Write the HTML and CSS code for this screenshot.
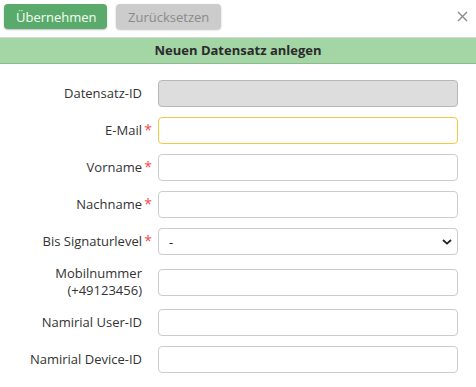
FILE: index.html
```html
<!DOCTYPE html>
<html lang="de">

<head>
    <meta charset="UTF-8">
    <meta name="viewport" content="width=device-width, initial-scale=1.0">
    <title>Neuen Datensatz anlegen</title>
    <link rel="stylesheet" href="styles.css">
</head>

<body>

    <div class="dialog">
        <!-- Toolbar -->
        <div class="toolbar">
            <button type="button" class="btn btn-primary">Übernehmen</button>
            <button type="button" class="btn btn-secondary">Zurücksetzen</button>
            <span class="close-btn">
                <svg width="11" height="11" viewBox="0 0 11 11">
                    <path d="M1 1 L10 10 M10 1 L1 10" stroke="#8a8a8a" stroke-width="1.4" fill="none" />
                </svg>
            </span>
        </div>

        <div class="panel-title">Neuen Datensatz anlegen</div>

        <!-- Form -->
        <form class="record-form">
            <div class="form-row">
                <label class="form-label">Datensatz-ID</label>
                <input type="text" class="input-field input-disabled" disabled>
            </div>
            <div class="form-row">
                <label class="form-label required">E-Mail</label>
                <input type="text" class="input-field input-focus">
            </div>
            <div class="form-row">
                <label class="form-label required">Vorname</label>
                <input type="text" class="input-field">
            </div>
            <div class="form-row">
                <label class="form-label required">Nachname</label>
                <input type="text" class="input-field">
            </div>
            <div class="form-row">
                <label class="form-label required">Bis Signaturlevel</label>
                <div class="select-wrap">
                    <select class="input-field select-field">
                        <option>-</option>
                    </select>
                    <svg class="select-arrow" width="10" height="6" viewBox="0 0 10 6">
                        <path d="M1 1 L5 4.6 L9 1" stroke="#222" stroke-width="1.8" fill="none" />
                    </svg>
                </div>
            </div>
            <div class="form-row">
                <label class="form-label">Mobilnummer<br>(+49123456)</label>
                <input type="text" class="input-field">
            </div>
            <div class="form-row">
                <label class="form-label">Namirial User-ID</label>
                <input type="text" class="input-field">
            </div>
            <div class="form-row">
                <label class="form-label">Namirial Device-ID</label>
                <input type="text" class="input-field">
            </div>
        </form>
    </div>

</body>

</html>
```

FILE: styles.css
```css
/* Global Styles */
body {
    font-family: "Open Sans", Arial, sans-serif;
    font-size: 13px;
    color: #333;
    background-color: white;
    margin: 0;
    padding: 0;
}

.dialog {
    width: 476px;
}

/* Toolbar */
.toolbar {
    display: flex;
    align-items: center;
    gap: 9px;
    padding: 4px 4px 8px 4px;
}

.btn {
    height: 25px;
    padding: 0 12px;
    border: none;
    border-radius: 4px;
    font-family: inherit;
    font-size: 13px;
    box-shadow: 0 1px 2px rgba(0, 0, 0, 0.25);
}

.btn-primary {
    width: 103px;
    background-color: #5aab6b;
    color: #f4fff4;
}

.btn-secondary {
    width: 105px;
    background-color: #cccccc;
    color: #8a8a8a;
}

.close-btn {
    margin-left: auto;
    margin-right: 4px;
    display: flex;
    align-items: center;
    height: 25px;
}

/* Title bar */
.panel-title {
    height: 25px;
    line-height: 25px;
    background-color: #a3d5a5;
    border-top: 1px solid #d8d8d8;
    border-bottom: 1px solid #8dba8f;
    text-align: center;
    font-weight: bold;
    color: #2b2b2b;
}

/* Form */
.record-form {
    padding: 16px 18px 0 0;
}

.form-row {
    display: grid;
    grid-template-columns: 142px 1fr;
    column-gap: 16px;
    align-items: center;
    margin-bottom: 10px;
}

.form-label {
    position: relative;
    text-align: right;
    line-height: 17px;
    color: #333;
}

.form-label.required::after {
    content: "*";
    position: absolute;
    right: -10px;
    top: -1px;
    color: #f04a4a;
    font-size: 14px;
}

.input-field {
    box-sizing: border-box;
    width: 100%;
    height: 27px;
    margin: 0;
    padding: 0 10px;
    border: 1px solid #cccccc;
    border-radius: 4px;
    background-color: white;
    font-family: inherit;
    font-size: 13px;
    color: #222;
}

.input-disabled {
    background-color: #dddddd;
    border-color: #b8b8b8;
}

.input-focus {
    border-color: #f5c842;
    outline: none;
}

.select-wrap {
    position: relative;
}

.select-field {
    appearance: none;
    -webkit-appearance: none;
    padding-left: 10px;
}

.select-arrow {
    position: absolute;
    right: 6px;
    top: 11px;
    pointer-events: none;
}
```
